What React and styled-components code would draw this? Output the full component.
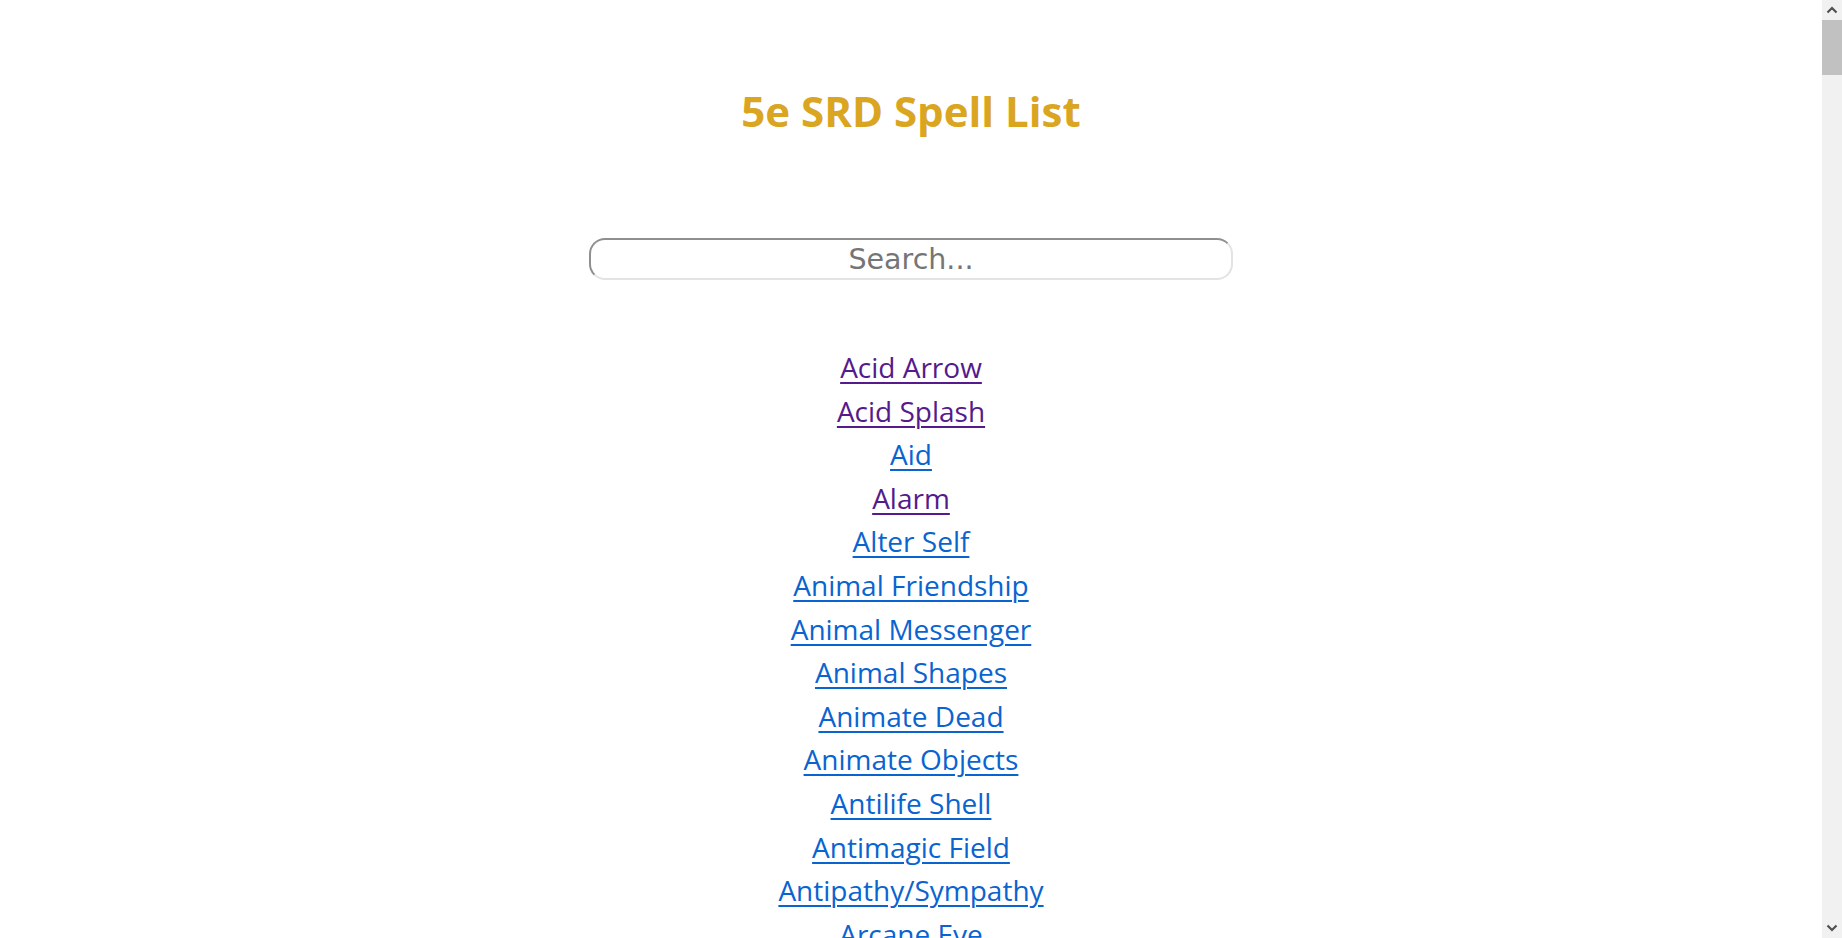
import React from "react";
import styled, { createGlobalStyle } from "styled-components";

const SPELLS = `Acid Arrow|Acid Splash|Aid|Alarm|Alter Self|Animal Friendship|Animal Messenger|Animal Shapes|Animate Dead|Animate Objects|Antilife Shell|Antimagic Field|Antipathy/Sympathy|Arcane Eye|Arcane Hand|Arcane Lock|Arcane Sword|Arcanist's Magic Aura|Astral Projection|Augury|Awaken|Bane|Banishment|Barkskin|Beacon of Hope|Bestow Curse|Black Tentacles|Blade Barrier|Bless|Blight|Blindness/Deafness|Blink|Blur|Branding Smite|Burning Hands|Call Lightning|Calm Emotions|Chain Lightning|Charm Person|Chill Touch|Circle of Death|Clairvoyance|Clone|Cloudkill|Color Spray|Command|Commune|Commune with Nature|Comprehend Languages|Compulsion|Cone of Cold|Confusion|Conjure Animals|Conjure Celestial|Conjure Elemental|Conjure Fey|Conjure Minor Elementals|Conjure Woodland Beings|Contact Other Plane|Contagion|Contingency|Continual Flame|Control Water|Control Weather|Counterspell|Create Food and Water|Create or Destroy Water|Create Undead|Creation|Cure Wounds|Dancing Lights|Darkness|Darkvision|Daylight|Death Ward|Delayed Blast Fireball|Demiplane|Detect Evil and Good|Detect Magic|Detect Poison and Disease|Detect Thoughts|Dimension Door|Disguise Self|Disintegrate|Dispel Evil and Good|Dispel Magic|Divination|Divine Favor|Divine Word|Dominate Beast|Dominate Monster|Dominate Person|Dream|Druidcraft|Earthquake|Eldritch Blast|Enhance Ability|Enlarge/Reduce|Entangle|Enthrall|Etherealness|Expeditious Retreat|Eyebite|Fabricate|Faerie Fire|Faithful Hound|False Life|Fear|Feather Fall|Feeblemind|Find Familiar|Find Steed|Find the Path|Find Traps|Finger of Death|Fire Bolt|Fire Shield|Fire Storm|Fireball|Flame Blade|Flame Strike|Flaming Sphere|Flesh to Stone|Floating Disk|Fly|Fog Cloud|Forbiddance|Forcecage|Foresight|Freedom of Movement|Freezing Sphere|Gaseous Form|Gate|Geas|Gentle Repose|Giant Insect|Glibness|Globe of Invulnerability|Glyph of Warding|Goodberry|Grease|Greater Invisibility|Greater Restoration|Guardian of Faith|Guards and Wards|Guidance|Guiding Bolt|Gust of Wind|Hallow|Hallucinatory Terrain|Harm|Haste|Heal|Healing Word|Heat Metal|Hellish Rebuke|Heroes' Feast|Heroism|Hideous Laughter|Hold Monster|Hold Person|Holy Aura|Hunter's Mark|Hypnotic Pattern|Ice Storm|Identify|Illusory Script|Imprisonment|Incendiary Cloud|Inflict Wounds|Insect Plague|Instant Summons|Invisibility|Irresistible Dance|Jump|Knock|Legend Lore|Lesser Restoration|Levitate|Light|Lightning Bolt|Locate Animals or Plants|Locate Creature|Locate Object|Longstrider|Mage Armor|Mage Hand|Magic Circle|Magic Jar|Magic Missile|Magic Mouth|Magic Weapon|Magnificent Mansion|Major Image|Mass Cure Wounds|Mass Heal|Mass Healing Word|Mass Suggestion|Maze|Meld into Stone|Mending|Message|Meteor Swarm|Mind Blank|Minor Illusion|Mirage Arcane|Mirror Image|Mislead|Misty Step|Modify Memory|Moonbeam|Move Earth|Nondetection|Pass without Trace|Passwall|Phantasmal Killer|Phantom Steed|Planar Ally|Planar Binding|Plane Shift|Plant Growth|Poison Spray|Polymorph|Power Word Kill|Power Word Stun|Prayer of Healing|Prestidigitation|Prismatic Spray|Prismatic Wall|Private Sanctum|Produce Flame|Programmed Illusion|Project Image|Protection from Energy|Protection from Evil and Good|Protection from Poison|Purify Food and Drink|Raise Dead|Ray of Enfeeblement|Ray of Frost|Regenerate|Reincarnate|Remove Curse|Resilient Sphere|Resistance|Resurrection|Reverse Gravity|Revivify|Rope Trick|Sacred Flame|Sanctuary|Scorching Ray|Scrying|Secret Chest|See Invisibility|Seeming|Sending|Sequester|Shapechange|Shatter|Shield|Shield of Faith|Shillelagh|Shocking Grasp|Silence|Silent Image|Simulacrum|Sleep|Sleet Storm|Slow|Spare the Dying|Speak with Animals|Speak with Dead|Speak with Plants|Spider Climb|Spike Growth|Spirit Guardians|Spiritual Weapon|Stinking Cloud|Stone Shape|Stoneskin|Storm of Vengeance|Suggestion|Sunbeam|Sunburst|Symbol|Telekinesis|Telepathic Bond|Teleport|Teleportation Circle|Thaumaturgy|Thunderwave|Time Stop|Tiny Hut|Tongues|Transport via Plants|Tree Stride|True Polymorph|True Resurrection|True Seeing|True Strike|Unseen Servant|Vampiric Touch|Vicious Mockery|Wall of Fire|Wall of Force|Wall of Ice|Wall of Stone|Wall of Thorns|Warding Bond|Water Breathing|Water Walk|Web|Weird|Wind Walk|Wind Wall|Wish|Word of Recall|Zone of Truth`.split("|");

const VISITED = new Set(["Acid Arrow", "Acid Splash", "Alarm"]);

const GlobalStyle = createGlobalStyle`
  html, body {
    margin: 0;
    padding: 0;
    background: #ffffff;
    overflow: hidden;
  }
  body {
    font-family: "Open Sans", "Noto Sans", sans-serif;
  }
`;

const Viewport = styled.div`
  display: flex;
  height: 100vh;
  width: 100vw;
  overflow: hidden;
`;

const Content = styled.main`
  flex: 1;
  min-width: 0;
  height: 100%;
  overflow: hidden;
  display: flex;
  flex-direction: column;
  align-items: center;
  padding-top: 83px;
  text-align: center;
  & > * {
    flex-shrink: 0;
  }
`;

const ScrollBar = styled.div`
  width: 20px;
  flex: none;
  display: flex;
  flex-direction: column;
  background: #f1f1f1;
`;

const ScrollButton = styled.div`
  height: 20px;
  flex: none;
  display: flex;
  align-items: center;
  justify-content: center;
`;

const ScrollTrack = styled.div`
  flex: 1;
  display: flex;
  flex-direction: column;
`;

const ScrollThumb = styled.div`
  height: 55px;
  flex: none;
  background: #c1c1c1;
`;

const Title = styled.h1`
  margin: 0;
  font-family: "Open Sans", "Noto Sans", sans-serif;
  font-weight: 700;
  font-size: 42px;
  line-height: 56px;
  color: #daa520;
`;

const SearchInput = styled.input`
  box-sizing: border-box;
  margin-top: 99px;
  width: 644px;
  height: 42px;
  border-radius: 16px;
  border-width: 2px;
  border-style: solid;
  border-color: #8f8f8f #e3e3e3 #e3e3e3 #8f8f8f;
  background: #fff;
  font-family: "DejaVu Sans", Verdana, sans-serif;
  font-size: 28.5px;
  color: #333;
  text-align: center;
  padding: 0 10px;
  outline: none;
  &::placeholder {
    color: #757575;
  }
`;

const SpellList = styled.ul`
  list-style: none;
  margin: 66px 0 0;
  padding: 0;
`;

const SpellItem = styled.li`
  font-family: "Open Sans", "Noto Sans", sans-serif;
  font-size: 28px;
  line-height: 43.6px;
`;

const SpellLink = styled.a`
  text-decoration: underline;
  text-decoration-thickness: 2px;
  text-underline-offset: 4px;
  color: ${(p) => (p.$visited ? "#551a8b" : "#0a64d0")};
`;

const Chevron = ({ up }) => (
  <svg width="12" height="8" viewBox="0 0 12 8">
    <path
      d={up ? "M1.5 6.5 L6 2 L10.5 6.5" : "M1.5 1.5 L6 6 L10.5 1.5"}
      fill="none"
      stroke="#505050"
      strokeWidth="2.2"
    />
  </svg>
);

export default function App() {
  return (
    <>
      <GlobalStyle />
      <Viewport>
        <Content>
          <Title>5e SRD Spell List</Title>
          <SearchInput type="text" placeholder="Search..." />
          <SpellList>
            {SPELLS.map((s) => (
              <SpellItem key={s}>
                <SpellLink href="#" $visited={VISITED.has(s)}>
                  {s}
                </SpellLink>
              </SpellItem>
            ))}
          </SpellList>
        </Content>
        <ScrollBar>
          <ScrollButton>
            <Chevron up />
          </ScrollButton>
          <ScrollTrack>
            <ScrollThumb />
          </ScrollTrack>
          <ScrollButton>
            <Chevron />
          </ScrollButton>
        </ScrollBar>
      </Viewport>
    </>
  );
}
